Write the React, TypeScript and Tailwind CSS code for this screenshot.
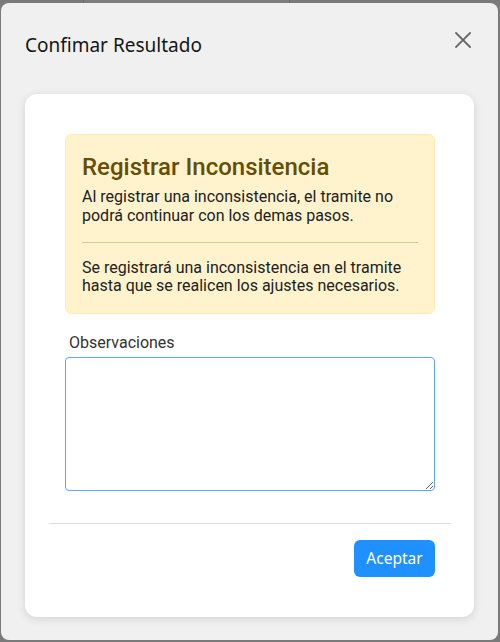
import { useState } from 'react';

const CloseIcon = () => (
  <svg width="16" height="16" viewBox="0 0 16 16" fill="none" stroke="#666666" strokeWidth="1.8" strokeLinecap="square">
    <path d="M1 1 L15 15 M15 1 L1 15" />
  </svg>
);

export default function App() {
  const [obs, setObs] = useState('');

  return (
    <div className="relative h-[642px] w-[500px] overflow-hidden bg-[#7a7a7a]">
      {/* page behind the overlay */}
      <div className="flex h-[3px]">
        <div className="w-[84px] border-r border-[#6c6c6c]" />
        <div className="w-[206px] border-r border-[#6c6c6c] bg-[#7d7d7d]" />
        <div className="flex-1" />
      </div>

      <div className="absolute left-[1px] top-[3px] right-[2px] bottom-[2px] flex flex-col rounded-lg bg-[#f0f0f0]">
        <div className="flex items-start justify-between pl-6 pr-[27px] pt-[29px]">
          <h1 className="text-[19px] leading-[26px] text-[#151515] [font-family:'Noto_Sans',sans-serif]">
            Confimar Resultado
          </h1>
          <button className="flex h-4 w-4 items-center justify-center">
            <CloseIcon />
          </button>
        </div>

        <div className="mx-6 mt-9 flex flex-col rounded-xl bg-white shadow-[0_2px_8px_rgba(0,0,0,0.12)] [font-family:Roboto,sans-serif]">
          <div className="pl-10 pr-[39px] pt-10">
            <div className="rounded-md border border-[#ffecb5] bg-[#fff3cd] px-4 pt-4 pb-[17px]">
              <h2 className="text-[24px] font-medium leading-[32px] text-[#664d03]">Registrar Inconsitencia</h2>
              <p className="mt-[5px] text-[16px] leading-[18.75px] text-[#212121]">
                Al registrar una inconsistencia, el tramite no podrá continuar con los demas pasos.
              </p>
              <hr className="my-4 border-t border-[#d9c899]" />
              <p className="text-[16px] leading-[18.75px] text-[#212121]">
                Se registrará una inconsistencia en el tramite hasta que se realicen los ajustes necesarios.
              </p>
            </div>

            <label className="mt-5 block px-1 text-[16px] leading-[18.75px] text-[#333333]">Observaciones</label>
            <textarea
              value={obs}
              onChange={(e) => setObs(e.target.value)}
              className="mt-[4px] block h-[134px] w-full rounded border border-[#5aa6f7] bg-white px-2 py-1 text-[16px] outline-none"
            />
          </div>

          <div className="ml-6 mr-[23px] mt-8 border-t border-[#dedede]" />

          <div className="flex justify-end pl-10 pr-[39px] pt-4 pb-10">
            <button className="h-[37px] w-[81px] rounded-md bg-[#1e90ff] text-[15.5px] text-white [font-family:'Noto_Sans',sans-serif]">
              Aceptar
            </button>
          </div>
        </div>
      </div>
    </div>
  );
}
